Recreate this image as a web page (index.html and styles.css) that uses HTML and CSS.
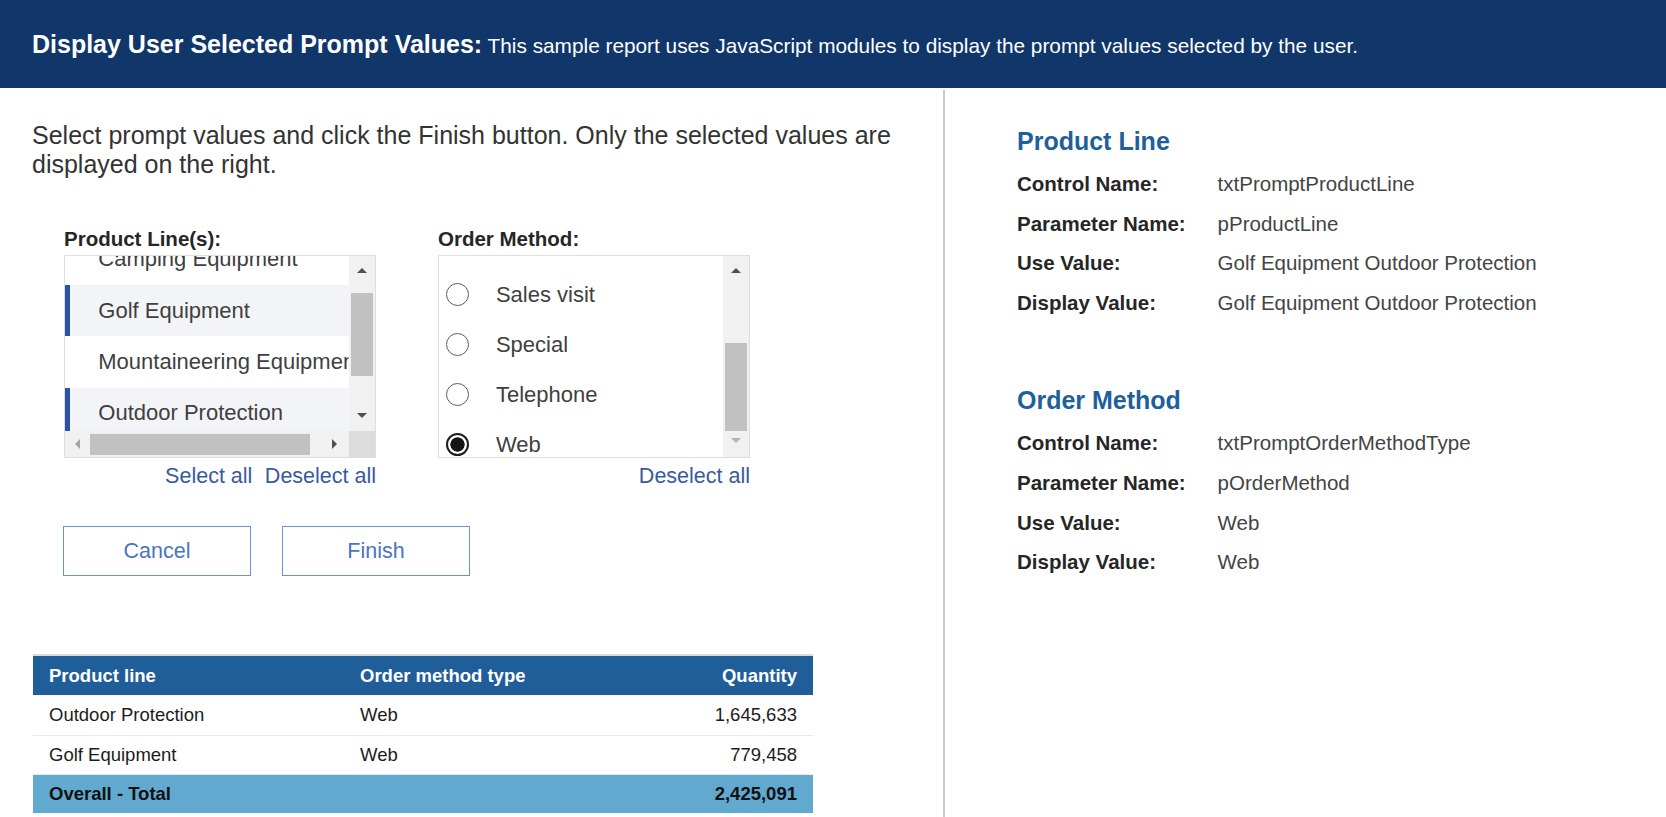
FILE: index.html
```html
<!DOCTYPE html>
<html lang="en">
<head>
    <meta charset="UTF-8">
    <title>Display User Selected Prompt Values</title>
    <link rel="stylesheet" href="styles.css">
</head>
<body>
    <div class="banner">
        <div class="banner-text"><b class="banner-title">Display User Selected Prompt Values:</b> This sample report uses JavaScript modules to display the prompt values selected by the user.</div>
    </div>

    <div class="workspace">
        <div class="left-panel">
            <p class="intro">Select prompt values and click the Finish button. Only the selected values are displayed on the right.</p>

            <div class="prompts">
                <!-- Produktlinje-liste -->
                <div class="prompt">
                    <div class="prompt-label">Product Line(s):</div>
                    <div class="listbox">
                        <div class="list-view">
                            <div class="list-items">
                                <div class="list-item">Camping Equipment</div>
                                <div class="list-item selected">Golf Equipment</div>
                                <div class="list-item">Mountaineering Equipment</div>
                                <div class="list-item selected">Outdoor Protection</div>
                            </div>
                        </div>
                        <div class="vscroll">
                            <span class="arrow-up"></span>
                            <span class="vthumb list-thumb"></span>
                            <span class="arrow-down"></span>
                        </div>
                        <div class="hscroll">
                            <span class="arrow-left"></span>
                            <span class="hthumb"></span>
                            <span class="arrow-right"></span>
                        </div>
                        <div class="corner"></div>
                    </div>
                    <div class="prompt-links">
                        <span>Select all</span>
                        <span>Deselect all</span>
                    </div>
                </div>

                <!-- Ordremetode-liste -->
                <div class="prompt">
                    <div class="prompt-label">Order Method:</div>
                    <div class="listbox radio-box">
                        <div class="radio-list">
                            <div class="radio-row"><span class="radio"></span>Sales visit</div>
                            <div class="radio-row"><span class="radio"></span>Special</div>
                            <div class="radio-row"><span class="radio"></span>Telephone</div>
                            <div class="radio-row"><span class="radio checked"></span>Web</div>
                        </div>
                        <div class="vscroll">
                            <span class="arrow-up"></span>
                            <span class="vthumb radio-thumb"></span>
                            <span class="arrow-down disabled"></span>
                        </div>
                    </div>
                    <div class="prompt-links">
                        <span>Deselect all</span>
                    </div>
                </div>
            </div>

            <div class="actions">
                <button class="btn">Cancel</button>
                <button class="btn">Finish</button>
            </div>

            <table class="report">
                <thead>
                    <tr>
                        <th class="col-line">Product line</th>
                        <th class="col-method">Order method type</th>
                        <th class="col-qty">Quantity</th>
                    </tr>
                </thead>
                <tbody>
                    <tr>
                        <td>Outdoor Protection</td>
                        <td>Web</td>
                        <td class="num">1,645,633</td>
                    </tr>
                    <tr>
                        <td>Golf Equipment</td>
                        <td>Web</td>
                        <td class="num">779,458</td>
                    </tr>
                    <tr class="total">
                        <td>Overall - Total</td>
                        <td></td>
                        <td class="num">2,425,091</td>
                    </tr>
                </tbody>
            </table>
        </div>

        <div class="right-panel">
            <div class="detail-group">
                <h2 class="detail-heading">Product Line</h2>
                <div class="detail-row"><span class="detail-label">Control Name:</span><span class="detail-value">txtPromptProductLine</span></div>
                <div class="detail-row"><span class="detail-label">Parameter Name:</span><span class="detail-value">pProductLine</span></div>
                <div class="detail-row"><span class="detail-label">Use Value:</span><span class="detail-value">Golf Equipment Outdoor Protection</span></div>
                <div class="detail-row"><span class="detail-label">Display Value:</span><span class="detail-value">Golf Equipment Outdoor Protection</span></div>
            </div>
            <div class="detail-group">
                <h2 class="detail-heading">Order Method</h2>
                <div class="detail-row"><span class="detail-label">Control Name:</span><span class="detail-value">txtPromptOrderMethodType</span></div>
                <div class="detail-row"><span class="detail-label">Parameter Name:</span><span class="detail-value">pOrderMethod</span></div>
                <div class="detail-row"><span class="detail-label">Use Value:</span><span class="detail-value">Web</span></div>
                <div class="detail-row"><span class="detail-label">Display Value:</span><span class="detail-value">Web</span></div>
            </div>
        </div>
    </div>
</body>
</html>
```

FILE: styles.css
```css
* {
    box-sizing: border-box;
}
body {
    margin: 0;
    font-family: "Liberation Sans", Arial, sans-serif;
    color: #333;
    background: #fff;
}
.banner {
    height: 90px;
    border-bottom: 2px solid #fff;
    background: #10366a;
    color: #fff;
    display: flex;
    align-items: center;
    padding-left: 32px;
    white-space: nowrap;
}
.banner-text {
    font-size: 20.8px;
}
.banner-title {
    font-size: 25px;
}
.workspace {
    display: flex;
    min-height: calc(100vh - 90px);
}
.left-panel {
    flex: 0 0 945px;
    border-right: 2px solid #c9c9c9;
    padding: 31px 20px 0 32px;
}
.intro {
    margin: 0;
    font-size: 25px;
    color: #333;
}
.prompts {
    display: flex;
    gap: 62px;
    margin: 48px 0 0 32px;
}
.prompt {
    width: 312px;
}
.prompt-label {
    font-size: 20.5px;
    font-weight: bold;
    color: #262626;
    margin-bottom: 4.4px;
}
.listbox {
    height: 203px;
    border: 1px solid #dedede;
    display: grid;
    grid-template-columns: 1fr 26px;
    grid-template-rows: 1fr 26px;
}
.list-view {
    overflow: hidden;
}
.list-items {
    margin-top: -22.7px;
}
.list-item {
    height: 51.3px;
    display: flex;
    align-items: center;
    padding-left: 33.3px;
    font-size: 22px;
    color: #3f3f3f;
    white-space: nowrap;
}
.list-item.selected {
    background: #f3f4f8;
    box-shadow: inset 5px 0 #2b55a3;
}
/* falske rullefelt */
.vscroll {
    background: #f1f1f1;
    display: flex;
    flex-direction: column;
    align-items: center;
}
.arrow-up, .arrow-down {
    width: 0;
    height: 0;
    border-left: 5.5px solid transparent;
    border-right: 5.5px solid transparent;
}
.arrow-up {
    margin-top: 11.5px;
    border-bottom: 5.5px solid #505050;
}
.arrow-down {
    border-top: 5.5px solid #505050;
}
.arrow-down.disabled {
    border-top-color: #b3b3b3;
}
.vthumb {
    width: 22px;
    background: #c1c1c1;
}
.list-thumb {
    margin-top: 20px;
    height: 83px;
}
.list-thumb + .arrow-down {
    margin-top: 37px;
}
.radio-thumb {
    margin-top: 70px;
    height: 88px;
}
.radio-thumb + .arrow-down {
    margin-top: 7.5px;
}
.hscroll {
    background: #f1f1f1;
    display: flex;
    align-items: center;
}
.arrow-left, .arrow-right {
    width: 0;
    height: 0;
    border-top: 5.5px solid transparent;
    border-bottom: 5.5px solid transparent;
}
.arrow-left {
    margin-left: 9.5px;
    border-right: 5.5px solid #a6a6a6;
}
.arrow-right {
    margin-left: 21.5px;
    border-left: 5.5px solid #505050;
}
.hthumb {
    margin-left: 10.7px;
    width: 220px;
    height: 21px;
    background: #c1c1c1;
}
.corner {
    background: #dcdcdc;
}
.radio-box {
    grid-template-rows: 1fr;
}
.radio-list {
    overflow: hidden;
    padding-top: 13.3px;
}
.radio-row {
    height: 50px;
    display: flex;
    align-items: center;
    font-size: 22px;
    color: #3f3f3f;
}
.radio {
    flex: none;
    width: 23px;
    height: 23px;
    border: 1.5px solid #5c5c5c;
    border-radius: 50%;
    margin: 0 26.5px 0 7.4px;
}
.radio.checked {
    border: 2px solid #1e1e1e;
    background: radial-gradient(circle closest-side, #151515 0 72%, #fff 78%);
}
.prompt-links {
    display: flex;
    justify-content: flex-end;
    gap: 12.5px;
    margin-top: 6px;
    font-size: 21.5px;
    color: #3a5aa0;
}
.actions {
    display: flex;
    gap: 31.6px;
    margin: 37px 0 0 31.3px;
}
.btn {
    width: 187.4px;
    height: 49.3px;
    border: 1px solid #6c90d2;
    background: #fff;
    color: #4b74bf;
    font-family: inherit;
    font-size: 21.5px;
    padding: 0;
}
.report {
    margin: 78.4px 0 0 1px;
    width: 780px;
    border-collapse: collapse;
    table-layout: fixed;
    font-size: 18.5px;
    color: #1c1c1c;
}
.report th, .report td {
    padding: 0 16px;
    text-align: left;
}
.report th {
    height: 40.2px;
    border-top: 2px solid #dcdcdc;
    background: #1f5e98;
    color: #fff;
}
.report td {
    height: 39.8px;
    border-bottom: 1px solid #e9e9e9;
}
.report .col-line {
    width: 311px;
}
.report .col-method {
    width: 270px;
}
.report .col-qty, .report .num {
    text-align: right;
}
.report .total td {
    height: 38px;
    background: #61a9cf;
    font-weight: bold;
    color: #111;
    border-bottom: none;
}
.right-panel {
    flex: 1;
    padding: 37px 0 0 72px;
}
.detail-heading {
    margin: 0 0 8px;
    font-size: 25px;
    color: #1f5f9a;
}
.detail-row {
    display: flex;
    align-items: center;
    height: 39.7px;
    font-size: 20.5px;
}
.detail-label {
    width: 200.6px;
    font-weight: bold;
    color: #262626;
}
.detail-value {
    color: #444;
}
.detail-group + .detail-group {
    margin-top: 63.7px;
}
```
